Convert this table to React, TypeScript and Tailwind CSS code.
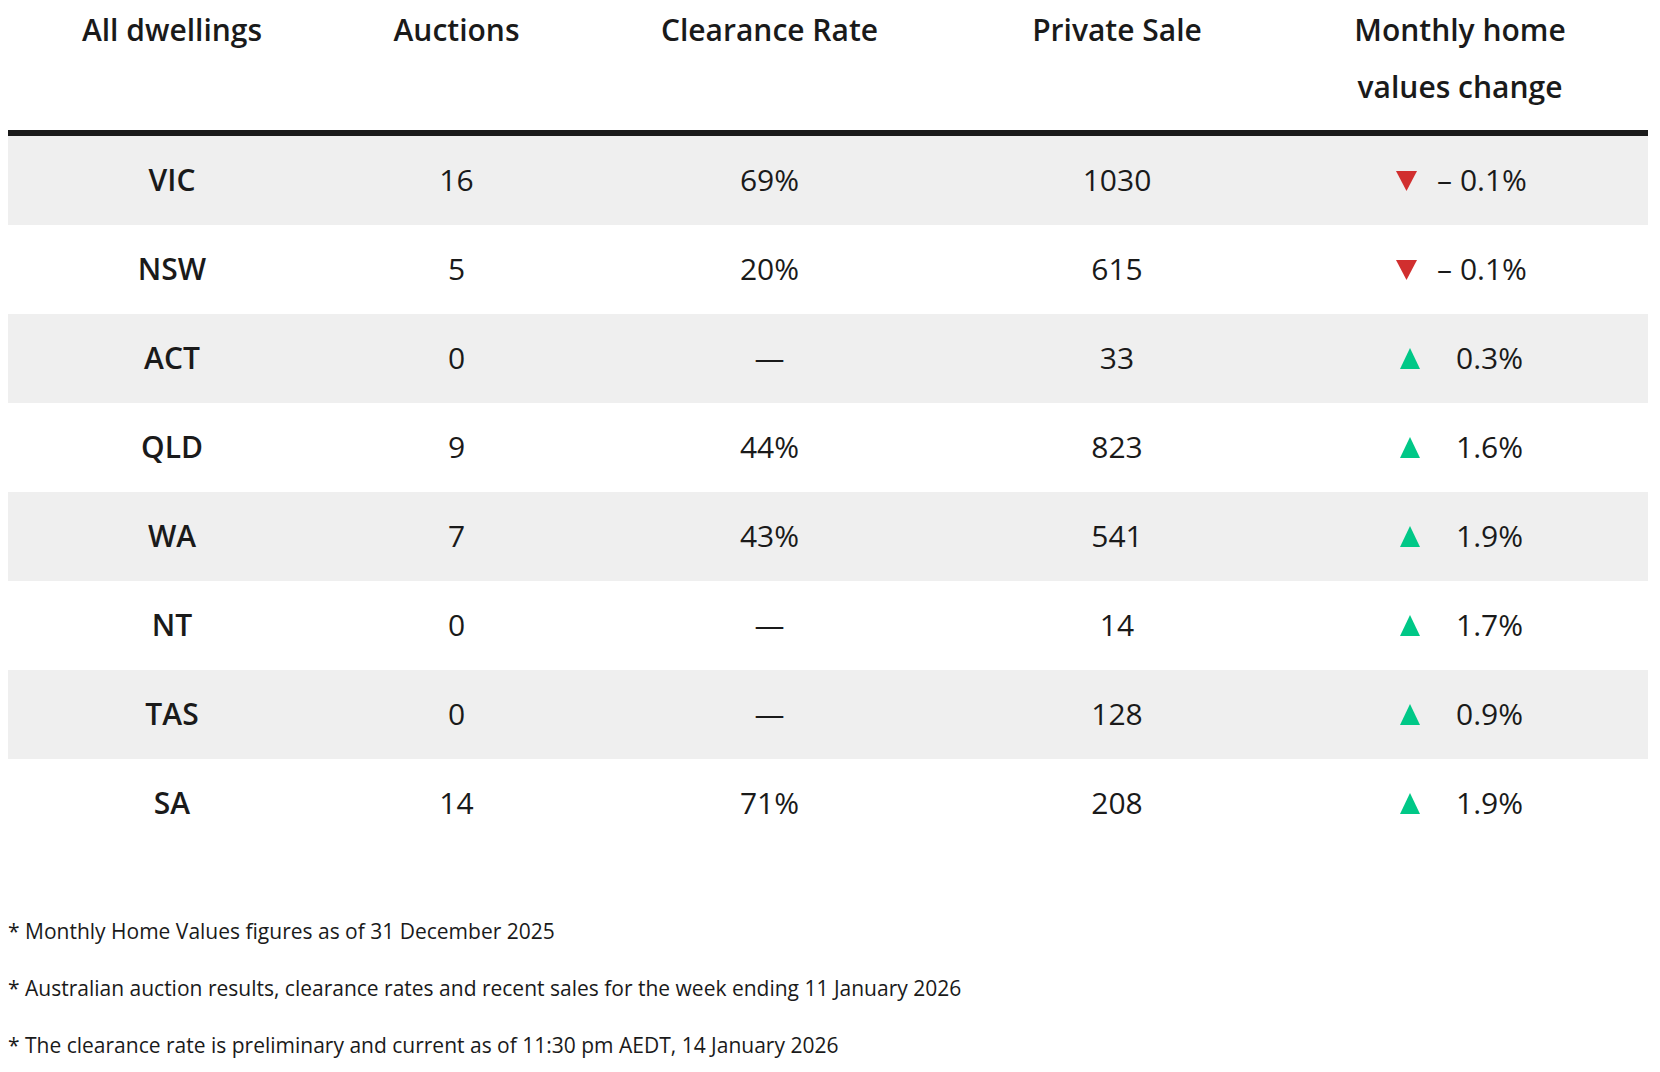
import React from "react";

type Row = {
  state: string;
  auctions: string;
  clearance: string;
  privateSale: string;
  change: string;
  up: boolean;
};

const rows: Row[] = [
  { state: "VIC", auctions: "16", clearance: "69%", privateSale: "1030", change: "– 0.1%", up: false },
  { state: "NSW", auctions: "5", clearance: "20%", privateSale: "615", change: "– 0.1%", up: false },
  { state: "ACT", auctions: "0", clearance: "—", privateSale: "33", change: "0.3%", up: true },
  { state: "QLD", auctions: "9", clearance: "44%", privateSale: "823", change: "1.6%", up: true },
  { state: "WA", auctions: "7", clearance: "43%", privateSale: "541", change: "1.9%", up: true },
  { state: "NT", auctions: "0", clearance: "—", privateSale: "14", change: "1.7%", up: true },
  { state: "TAS", auctions: "0", clearance: "—", privateSale: "128", change: "0.9%", up: true },
  { state: "SA", auctions: "14", clearance: "71%", privateSale: "208", change: "1.9%", up: true },
];

const cols = "grid grid-cols-[328px_241px_385px_310px_376px]";

function Down() {
  return (
    <svg width="21" height="20" viewBox="0 0 21 20" className="shrink-0">
      <polygon points="0,0 21,0 10.5,20" fill="#d12f2f" />
    </svg>
  );
}

function Up() {
  return (
    <svg width="20" height="21" viewBox="0 0 20 21" className="shrink-0">
      <polygon points="10,0 20,21 0,21" fill="#00c887" />
    </svg>
  );
}

export default function App() {
  return (
    <div
      className="w-[1660px] min-h-[1072px] bg-white text-[#1a1a1a]"
      style={{ fontFamily: '"Open Sans", "Noto Sans", sans-serif' }}
    >
      <div className="mx-2 w-[1640px]">
        <div className={`${cols} h-[130px] border-b-[6px] border-[#1a1a1a] box-content text-[30px] font-semibold leading-[57px] text-center`}>
          <div className="pt-[1px]">All dwellings</div>
          <div className="pt-[1px]">Auctions</div>
          <div className="pt-[1px]">Clearance Rate</div>
          <div className="pt-[1px]">Private Sale</div>
          <div className="pt-[1px]">
            Monthly home
            <br />
            values change
          </div>
        </div>
        {rows.map((r, i) => (
          <div
            key={r.state}
            className={`${cols} h-[89px] items-center text-center text-[30px] leading-[40px] ${i % 2 === 0 ? "bg-[#efefef]" : "bg-white"}`}
          >
            <div className="font-semibold pb-[1px]">{r.state}</div>
            <div className="pb-[1px]">{r.auctions}</div>
            <div className="pb-[1px]">{r.clearance}</div>
            <div className="pb-[1px]">{r.privateSale}</div>
            <div className="flex items-center justify-center pl-[3px]">
              {r.up ? <Up /> : <Down />}
              <span className={`pb-[1px] ${r.up ? "ml-[36px]" : "ml-[20px]"}`}>{r.change}</span>
            </div>
          </div>
        ))}
        <div className="pt-[68px] text-[21px] leading-[30px]">
          <p className="mb-[27px]">* Monthly Home Values figures as of 31 December 2025</p>
          <p className="mb-[27px]">
            * Australian auction results, clearance rates and recent sales for the week ending 11 January 2026
          </p>
          <p>* The clearance rate is preliminary and current as of 11:30 pm AEDT, 14 January 2026</p>
        </div>
      </div>
    </div>
  );
}
